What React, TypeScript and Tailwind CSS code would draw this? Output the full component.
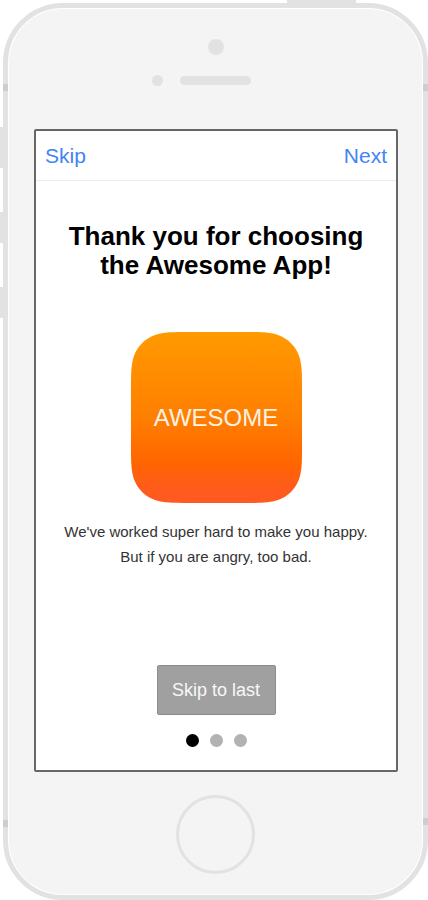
import { useState } from "react";

const pages = ["Welcome", "Features", "Finish"];

function AppIcon() {
  return (
    <div className="grid h-[171px] w-[171px] place-items-center">
      <svg viewBox="0 0 171 171" className="col-start-1 row-start-1 h-full w-full" aria-hidden="true">
        <defs>
          <linearGradient id="sunset" x1="0" y1="0" x2="0" y2="1">
            <stop offset="0" stopColor="#ff9a00" />
            <stop offset="0.5" stopColor="#ff7f00" />
            <stop offset="0.77" stopColor="#ff6500" />
            <stop offset="0.9" stopColor="#ff5c1a" />
            <stop offset="1" stopColor="#ff5a22" />
          </linearGradient>
        </defs>
        <path
          fill="url(#sunset)"
          d="M58 0H113C129.700 0 138 0 147 2.900C156.900 6.400 164.600 14.100 168.100 24C171 33 171 41.300 171 58V113C171 129.700 171 138 168.100 147C164.600 156.900 156.900 164.600 147 168.100C138 171 129.700 171 113 171H58C41.300 171 33 171 24 168.100C14.100 164.600 6.400 156.900 2.900 147C0 138 0 129.700 0 113V58C0 41.300 0 33 2.900 24C6.400 14.100 14.100 6.400 24 2.900C33 0 41.300 0 58 0Z"
        />
      </svg>
      <span className="col-start-1 row-start-1 text-2xl text-[#fbf1e4]">AWESOME</span>
    </div>
  );
}

function Screen() {
  const [page, setPage] = useState(0);
  const last = pages.length - 1;

  return (
    <main className="mr-6 ml-[25px] flex min-h-[643px] flex-col rounded-xs border-2 border-[#666] bg-white">
      <nav className="flex h-[50px] items-center justify-between border-b border-[#ececec] px-[9px] text-[21px] text-[#4285f4]">
        <button type="button" onClick={() => setPage(last)}>Skip</button>
        <button type="button" onClick={() => setPage(Math.min(page + 1, last))}>Next</button>
      </nav>
      <section className="flex grow flex-col items-center pt-[41px] pb-[23px] text-center">
        <h1 className="text-[26px] leading-[29px] font-bold text-black">
          Thank you for choosing
          <br />
          the Awesome App!
        </h1>
        <div className="mt-[52px]">
          <AppIcon />
        </div>
        <p className="mt-4 text-[15px] leading-[25px] text-[#333]">
          We've worked super hard to make you happy.
          <br />
          But if you are angry, too bad.
        </p>
        <button
          type="button"
          onClick={() => setPage(last)}
          className="mt-auto h-[50px] w-[119px] rounded-xs border border-[#8c8c8c] bg-[#a0a0a0] text-lg text-[#f8f8f8]"
        >
          Skip to last
        </button>
        <div className="mt-[19px] flex gap-[11px]">
          {pages.map((name, i) => (
            <button
              key={name}
              type="button"
              aria-label={name}
              onClick={() => setPage(i)}
              className={`h-[13px] w-[13px] rounded-full ${i === page ? "bg-black" : "bg-[#b2b2b2]"}`}
            />
          ))}
        </div>
      </section>
    </main>
  );
}

export default function App() {
  return (
    <div className="min-h-screen bg-white pt-[3px] pl-[3px] font-['Liberation_Sans',Arial,sans-serif]">
      <div className="relative rounded-[60px] border-[5px] border-[#e2e2e2] bg-white p-px">
        <span className="absolute -top-2 right-[67px] h-[3px] w-[69px] bg-[#e2e2e2]" />
        <span className="absolute top-[119px] -left-2 h-[41px] w-[3px] bg-[#e2e2e2]" />
        <span className="absolute top-[204px] -left-2 h-[31px] w-[3px] bg-[#e2e2e2]" />
        <span className="absolute top-[279px] -left-2 h-[31px] w-[3px] bg-[#e2e2e2]" />
        <span className="absolute top-[76px] -left-[5px] h-[7px] w-[5px] bg-[#cdcdcd]" />
        <span className="absolute top-[76px] -right-[5px] h-[7px] w-[5px] bg-[#cdcdcd]" />
        <span className="absolute bottom-[68px] -left-[5px] h-[7px] w-[5px] bg-[#cdcdcd]" />
        <span className="absolute -right-[5px] bottom-[70px] h-[7px] w-[5px] bg-[#cdcdcd]" />
        <div className="rounded-[54px] bg-[#f4f4f4]">
          <header className="flex h-[120px] flex-col items-center pt-[30px]">
            <span className="h-4 w-4 rounded-full bg-[#e2e2e2]" />
            <div className="mt-5 grid w-full grid-cols-[1fr_71px_1fr] items-center">
              <span className="mr-[17px] h-[11px] w-[11px] justify-self-end rounded-full bg-[#e2e2e2]" />
              <span className="h-[9px] rounded-full bg-[#e2e2e2]" />
            </div>
          </header>
          <Screen />
          <footer className="flex h-[122px] justify-center pt-[23px]">
            <button
              type="button"
              aria-label="Home"
              className="h-[79px] w-[79px] rounded-full border-[3px] border-[#e2e2e2]"
            />
          </footer>
        </div>
      </div>
    </div>
  );
}
